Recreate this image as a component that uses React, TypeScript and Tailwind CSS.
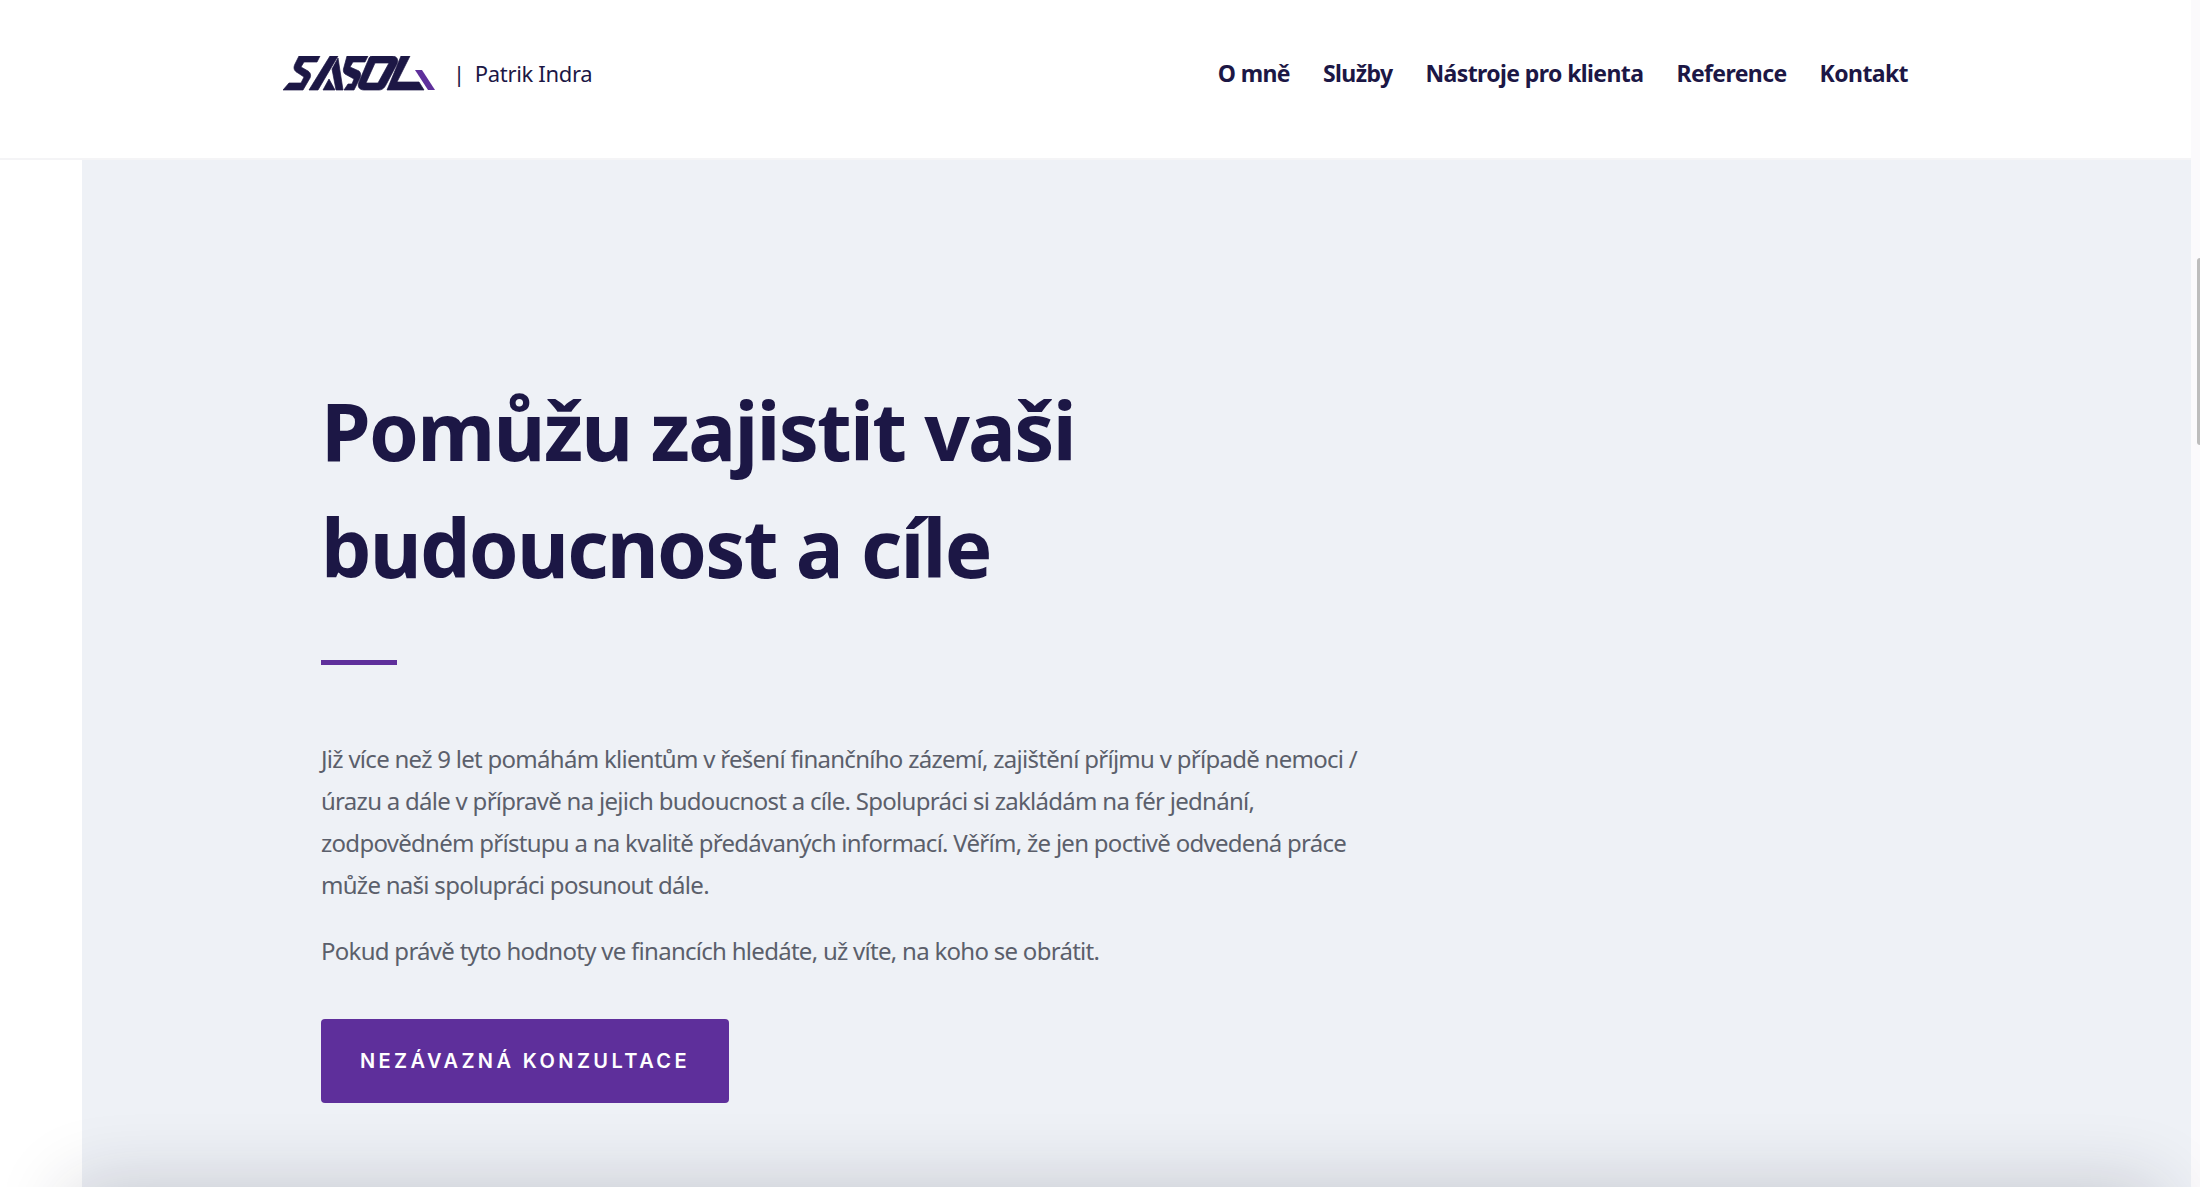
const navItems = ['O mně', 'Služby', 'Nástroje pro klienta', 'Reference', 'Kontakt'];

const Logo = () => (
  <svg width="152" height="35" viewBox="0 0 152 35" className="block">
    <g fill="#1c1745" stroke="#1c1745" strokeWidth="0.7">
      {/* S */}
      <path d="M16 0H37L34 6H21L18 11L25 15C28 17 28 20 27 22L20 34H0L6 27H18L21 21L15 17C11 15 10 12 12 8L15 2Z" />
      {/* A */}
      <path d="M26 34H35L55 0H47ZM40 34L46 23L52 34ZM55 2L60 34H53L49 13Z" />
      {/* second S */}
      <path d="M64 0H85L82 6H70L67 11L76 15C78 17 78 19 77 22L71 34H61L65 28H69L71 23L62 18C60 16 60 14 61 11Z" />
      {/* O */}
      <path fillRule="evenodd" d="M89 0H109C114 0 116 4 114 8L104 27C102 31 100 34 96 34H81C76 34 74 30 76 26L84 7C86 3 86 0 89 0ZM92 7L83 27H95L106 7Z" />
      {/* L */}
      <path d="M118 0H127L114 26H136L141 34H104Z" />
    </g>
    <path fill="#5e2f9b" d="M132 14H139L152 34H145Z" />
  </svg>
);

export default function App() {
  return (
    <div className="relative h-[1187px] w-[2200px] overflow-hidden bg-[#fbfafc] font-['Noto_Sans',sans-serif]">
      <div className="flex h-full w-[2191px] flex-col bg-white">
        <header className="flex h-[160px] shrink-0 items-center justify-between border-b-2 border-[#f4f4f6] px-[283px] pb-[12px]">
          <div className="flex items-center">
            <Logo />
            <span className="ml-[18px] text-[22px] tracking-[-0.015em] text-[#1c1745]">
              <span className="mr-[10px]">|</span>Patrik Indra
            </span>
          </div>
          <nav className="flex gap-[33px]">
            {navItems.map((item) => (
              <a key={item} className="text-[23px] font-bold tracking-[-0.026em] text-[#1c1745]">{item}</a>
            ))}
          </nav>
        </header>
        <main className="ml-[82px] flex-1 bg-[#eef1f6] pl-[239px] pt-[211px]">
          <h1 className="text-[80px] leading-[117px] font-bold tracking-[-0.022em] text-[#1c1745]">
            Pomůžu zajistit vaši<br />budoucnost a cíle
          </h1>
          <div className="mt-[55px] h-[5px] w-[76px] bg-[#5e2f9b]" />
          <p className="mt-[73px] whitespace-nowrap text-[24px] leading-[42px] tracking-[-0.03em] text-[#5b5f6b]">
            Již více než 9 let pomáhám klientům v řešení finančního zázemí, zajištění příjmu v případě nemoci /<br />
            úrazu a dále v přípravě na jejich budoucnost a cíle. Spolupráci si zakládám na fér jednání,<br />
            zodpovědném přístupu a na kvalitě předávaných informací. Věřím, že jen poctivě odvedená práce<br />
            může naši spolupráci posunout dále.
          </p>
          <p className="mt-[24px] whitespace-nowrap text-[24px] leading-[42px] tracking-[-0.03em] text-[#5b5f6b]">
            Pokud právě tyto hodnoty ve financích hledáte, už víte, na koho se obrátit.
          </p>
          <a className="mt-[47px] flex h-[84px] w-[408px] items-center justify-center rounded-[4px] bg-[#5e2f9b] font-['Inter',sans-serif] text-[20px] font-semibold tracking-[0.17em] text-white">
            NEZÁVAZNÁ KONZULTACE
          </a>
        </main>
      </div>
      {/* next section sits just below the fold, only its shadow shows */}
      <div className="absolute left-[70px] top-[1187px] h-[100px] w-[2090px] shadow-[0_0_76px_rgba(30,30,50,0.2)]" />
      <div className="absolute right-0 top-[258px] h-[187px] w-[3px] rounded-l-sm bg-[#bdbdbd]" />
    </div>
  );
}
